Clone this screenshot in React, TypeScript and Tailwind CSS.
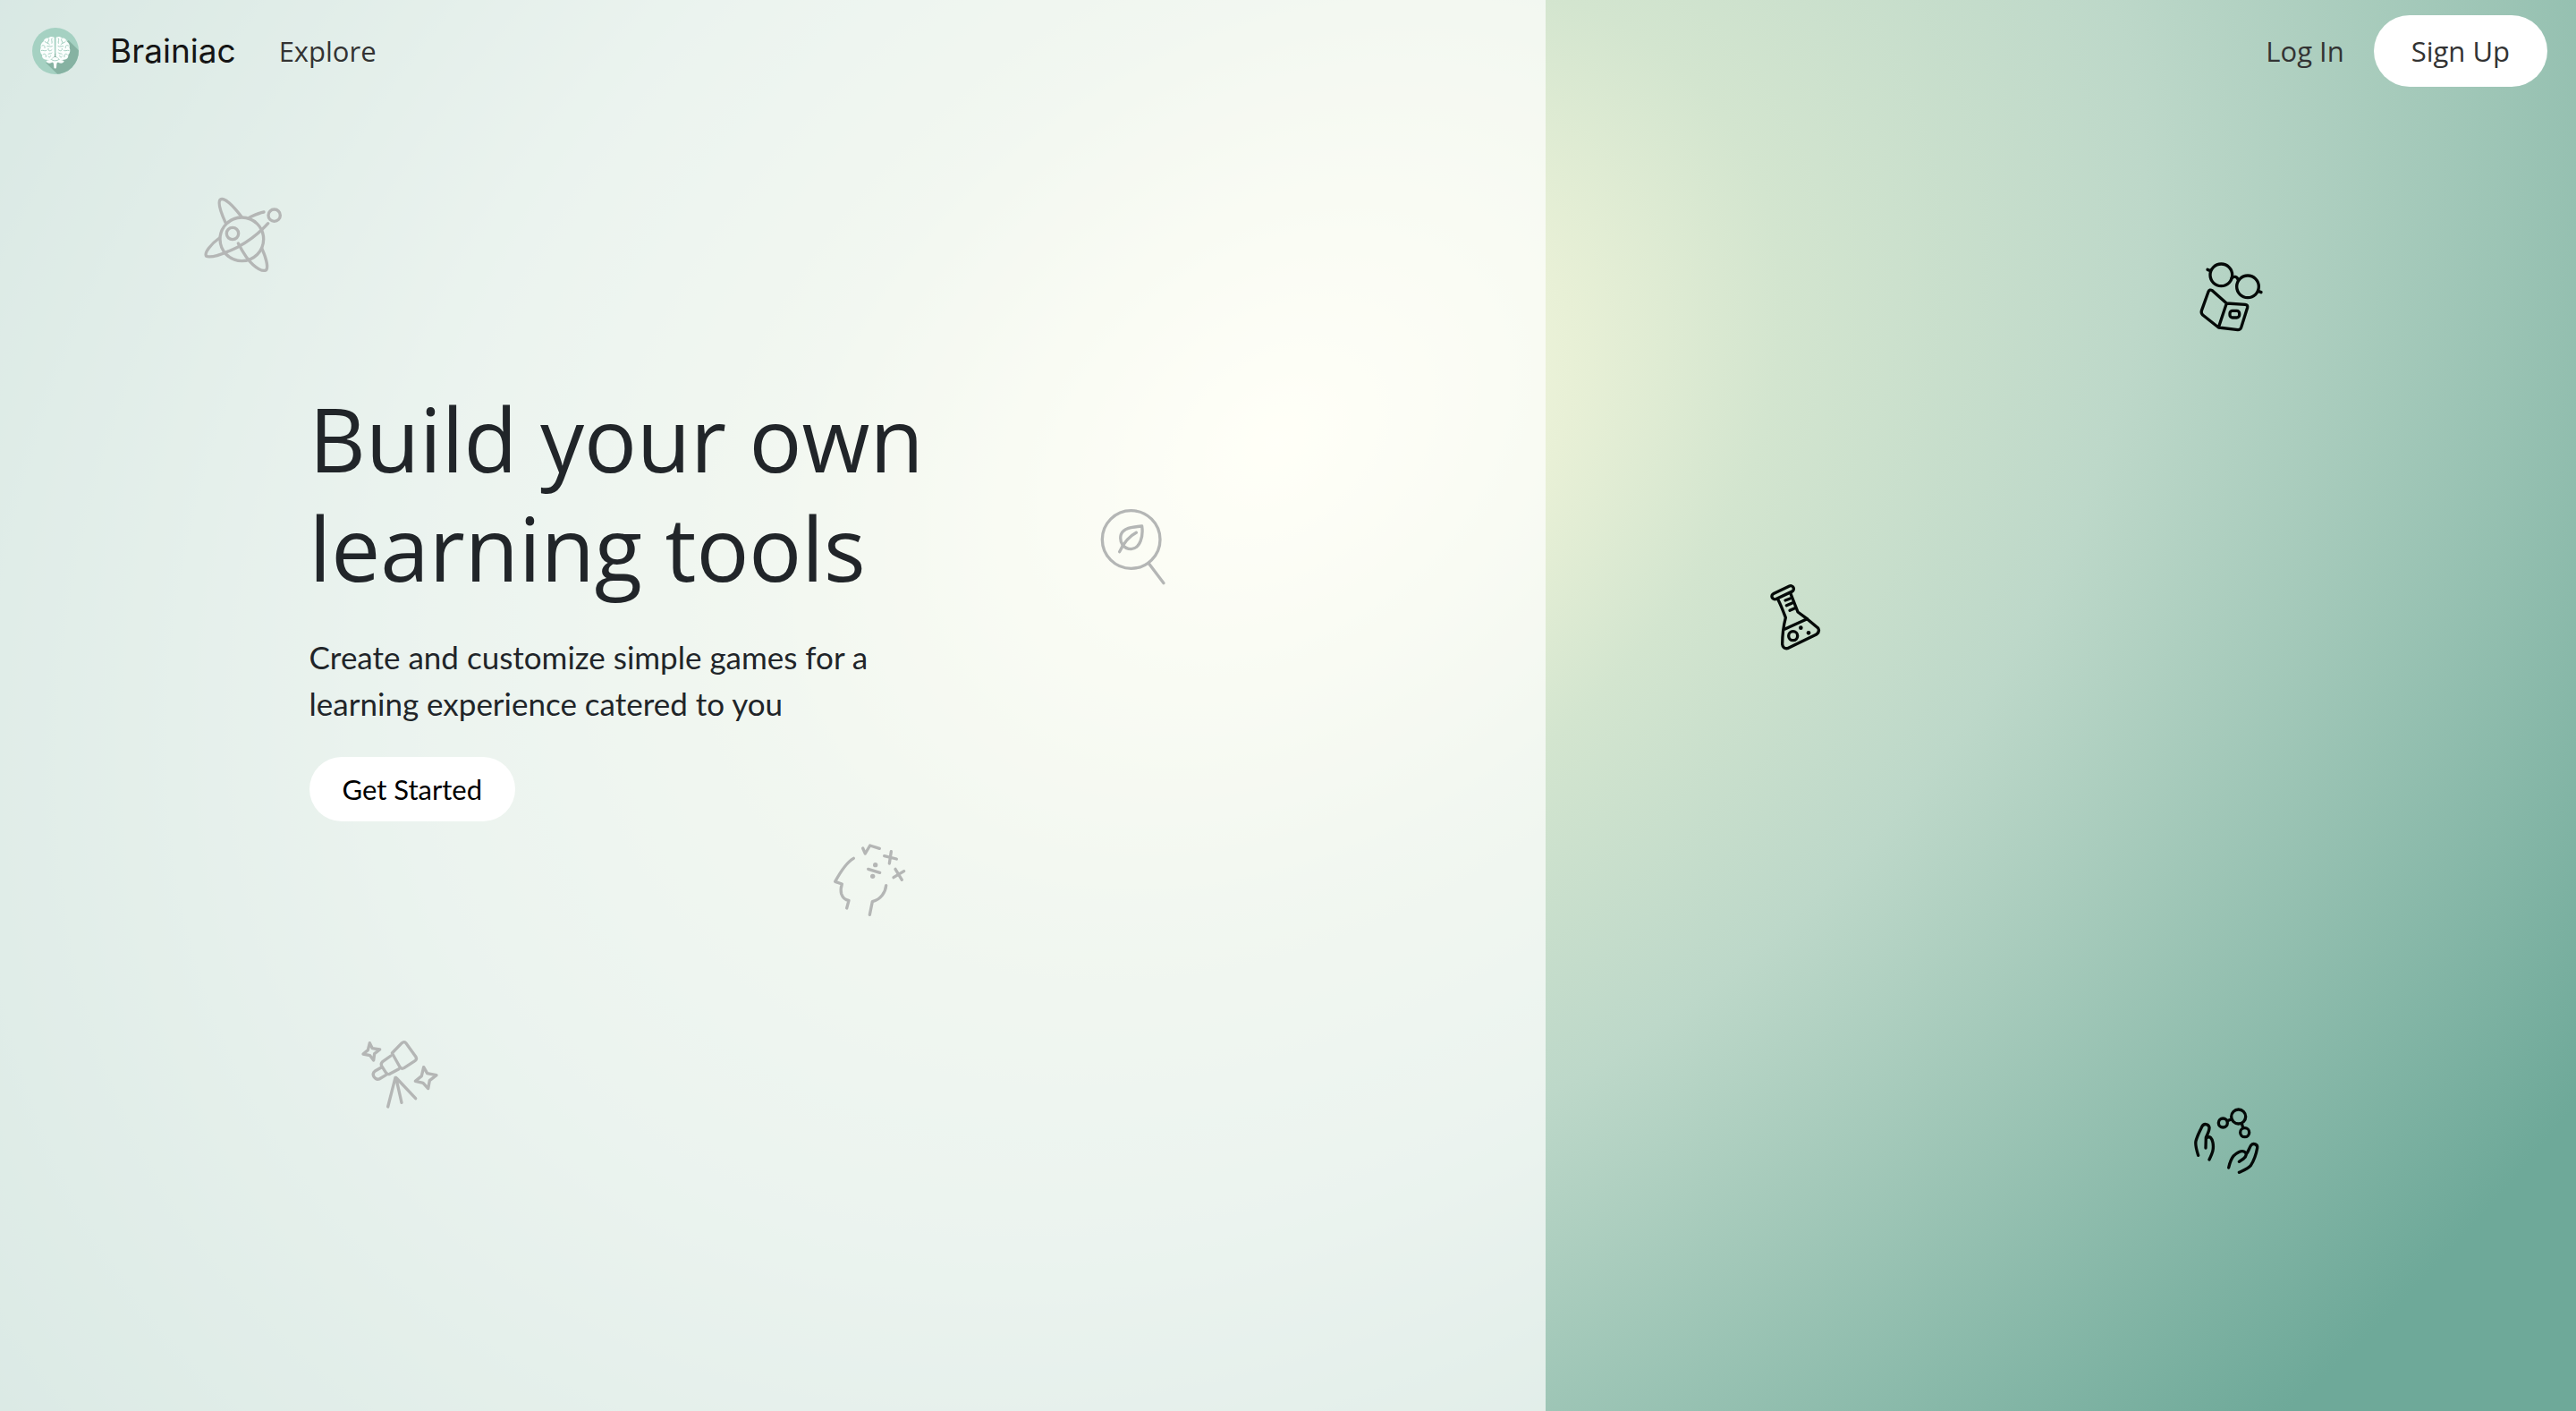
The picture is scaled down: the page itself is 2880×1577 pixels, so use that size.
import type { ReactNode } from "react";

type DoodleProps = {
  place: string;
  viewBox: string;
  children: ReactNode;
};

function Doodle({ place, viewBox, children }: DoodleProps) {
  return (
    <svg
      aria-hidden="true"
      viewBox={viewBox}
      className={`absolute ${place}`}
      fill="none"
      stroke="#050a08"
      strokeWidth="10"
      strokeLinecap="round"
      strokeLinejoin="round"
    >
      {children}
    </svg>
  );
}

function Planet() {
  return (
    <Doodle place="left-[7.3%] top-[13%] w-[120px]" viewBox="0 0 360 330">
      <circle cx="181" cy="187" r="73" />
      <circle cx="150" cy="168" r="20" />
      <circle cx="290" cy="107" r="20" />
      <path d="M126 131C112 100 100 66 108 55C122 43 152 76 179 110" />
      <path d="M106 183C78 203 54 232 62 244C84 254 145 224 168 213C200 196 240 166 269 134" />
      <path d="M204 116L213 111C228 104 243 98 255 96" />
      <path d="M169 201C185 232 202 258 219 273C238 290 252 295 262 291C272 281 260 244 248 217" />
    </Doodle>
  );
}

function Magnifier() {
  return (
    <Doodle place="left-[42.2%] top-[35.2%] w-[110px]" viewBox="0 0 330 330">
      <circle cx="149" cy="144" r="97" />
      <path d="M207 223L258 290" />
      <path d="M185 99C157 102 124 103 115 127C108 151 123 176 149 176C180 173 190 132 185 99Z" />
      <path d="M166 121C139 135 124 155 110 185" />
    </Doodle>
  );
}

function Head() {
  return (
    <Doodle place="left-[31.8%] top-[58.7%] w-[110px]" viewBox="0 0 330 330">
      <path d="M115 100C90 114 71 145 53 178L76 186C72 198 71 207 74 219C79 234 89 240 99 241L92 267" />
      <path d="M224 191C222 213 207 237 178 245L169 289" />
      <path d="M146 66L154 84L170 57L202 67" />
      <path d="M164 136L203 148M241 77L235 117M218 92L259 102M255 136L277 172M284 143L249 164" />
      <g fill="#050a08" stroke="none">
        <circle cx="188" cy="122" r="8" />
        <circle cx="179" cy="160" r="8" />
      </g>
    </Doodle>
  );
}

function Telescope() {
  return (
    <Doodle place="left-[13.5%] top-[72.6%] w-[120px]" viewBox="0 0 360 330">
      <path d="M148 96L181 62Q189 55 195 63L228 109Q232 116 226 121L188 146Q181 150 175 144Z" />
      <path d="M144 105L117 124Q109 131 113 139L127 161Q132 169 140 166L171 149" />
      <path d="M112 144L91 156Q81 164 87 175Q94 186 105 183L128 169" />
      <path d="M159 178L134 276M161 178L180 262M163 180L227 248" />
      <path d="M73 62L82 80L107 84L89 98L86 120L74 104L51 99L67 86Z" />
      <path d="M254 143L266 164L297 170L274 188L269 215L252 196L226 190L247 173Z" />
    </Doodle>
  );
}

function BookAndGlasses() {
  return (
    <Doodle place="left-[84.7%] top-[17.8%] w-[110px]" viewBox="0 0 330 300">
      <circle cx="133" cy="79" r="37" />
      <circle cx="222" cy="118" r="37" />
      <path d="M87 61L97 65M168 90C175 82 186 84 189 94M257 133L267 137" />
      <path d="M151 174L103 131Q94 126 90 135L67 199Q65 207 71 213L124 255L189 263Q197 263 200 255L221 188Q223 179 213 178L151 174L124 255" />
      <rect x="162" y="199" width="32" height="23" rx="9" />
    </Doodle>
  );
}

function Flask() {
  return (
    <Doodle place="left-[68.1%] top-[40.6%] w-[90px]" viewBox="0 0 270 300">
      <rect x="57" y="57" width="79" height="20" rx="10" transform="rotate(-25 96 67)" />
      <path d="M80 89C92 112 99 132 106 151C98 182 95 211 95 240Q97 256 112 254L208 208Q222 199 215 186L178 155L147 132L123 71" />
      <path d="M104 189L178 155M105 93L121 87M109 110L128 102M120 127L137 119" />
      <circle cx="131" cy="212" r="15" />
      <g fill="#050a08" stroke="none">
        <circle cx="157" cy="185" r="7" />
        <circle cx="183" cy="202" r="7" />
      </g>
    </Doodle>
  );
}

function Hands() {
  return (
    <Doodle place="left-[84.5%] top-[77.7%] w-[110px]" viewBox="0 0 330 300">
      <circle cx="206" cy="69" r="24" />
      <circle cx="154" cy="90" r="15" />
      <circle cx="227" cy="122" r="15" />
      <path d="M169 83L182 78M217 92L221 106" />
      <path d="M71 199C65 180 60 165 63 151C68 132 76 119 83 103C89 90 106 93 108 105C109 115 103 127 97 139L96 174" />
      <path d="M99 140C110 132 117 142 120 156C124 178 119 190 108 213" />
      <path d="M173 240C177 222 181 211 190 200C204 188 218 179 229 189C235 196 231 203 223 210L208 220" />
      <path d="M234 192C241 182 243 172 248 165C256 156 271 162 269 174C265 196 258 216 247 233C237 244 223 249 208 256" />
    </Doodle>
  );
}

function Logo() {
  return (
    <svg aria-hidden="true" viewBox="0 0 156 156" className="size-[52px] shrink-0">
      <defs>
        <clipPath id="logo-disc">
          <circle cx="78" cy="78" r="78" />
        </clipPath>
      </defs>
      <g clipPath="url(#logo-disc)">
        <rect width="156" height="156" fill="#a5d1c2" />
        <path d="M122 42L180 100V180H110L46 118Z" fill="#86b2a2" />
      </g>
      <g fill="#fbfefd">
        <path d="M74 32C66 28 58 30 54 35C46 33 39 39 38 46C30 51 27 60 29 67C25 76 27 86 33 91C32 102 40 109 50 107C55 112 63 109 66 103L75 96Z" />
        <path d="M80 32C88 28 96 30 100 35C108 33 115 39 116 46C124 51 127 60 125 67C129 76 127 86 121 91C122 102 114 109 104 107C99 112 91 109 88 103L79 96Z" />
        <path d="M47 111C56 109 62 108 66 105C70 97 84 97 88 105C92 108 98 109 107 111C106 118 98 121 90 118C86 115 83 117 82 122L81 134Q77 139 73 134L72 122C71 117 68 115 64 118C56 121 48 118 47 111Z" />
      </g>
      <g fill="none" stroke="#a5d1c2" strokeWidth="3" strokeLinecap="round">
        <path d="M66 36C62 42 69 46 66 52M56 38C58 44 51 46 52 52M42 46C46 52 54 50 58 56M33 60C40 56 44 62 42 68M50 62C56 60 60 66 67 62M31 76C38 74 42 80 48 76M54 70C52 78 60 80 66 74M36 90C42 84 48 90 46 98M54 88C58 84 64 90 66 84M54 96C56 102 62 98 62 94" />
        <path d="M88 36C92 42 85 46 88 52M98 38C96 44 103 46 102 52M112 46C108 52 100 50 96 56M121 60C114 56 110 62 112 68M104 62C98 60 94 66 87 62M123 76C116 74 112 80 106 76M100 70C102 78 94 80 88 74M118 90C112 84 106 90 108 98M100 88C96 84 90 90 88 84M100 96C98 102 92 98 92 94" />
        <path d="M64 106C68 112 86 112 90 106" />
      </g>
    </svg>
  );
}

export default function App() {
  return (
    <div className="relative isolate min-h-screen overflow-hidden font-['Open_Sans',sans-serif]">
      <div aria-hidden="true" className="absolute inset-0 -z-10 overflow-hidden bg-[#6ea999]">
        <div className="absolute left-[49.6%] top-[31.3%] size-[300vw] -translate-x-1/2 -translate-y-1/2 -rotate-37 bg-[radial-gradient(74vw_54vw_at_center,#ffffe6_0%,#e8f0d6_17%,#d3e5cf_29%,#bdd8c9_50%,#6ea999_100%)]" />
        <Planet />
        <Magnifier />
        <Head />
        <Telescope />
        <BookAndGlasses />
        <Flask />
        <Hands />
        <div className="absolute inset-y-0 left-0 w-3/5 bg-white/70" />
      </div>

      <header className="flex items-center justify-between py-[17px] pl-9 pr-8 text-[31px] leading-10 text-[#333333]">
        <nav aria-label="Main" className="flex items-center">
          <a href="#home" className="flex items-center gap-[35px] font-['Inter',sans-serif] text-[37px] text-[#151515]">
            <Logo />
            Brainiac
          </a>
          <a href="#explore" className="ml-[48px]">Explore</a>
        </nav>
        <div className="flex items-center gap-[33px]">
          <a href="#login">Log In</a>
          <a href="#signup" className="flex h-20 items-center rounded-full bg-white px-[42px]">Sign Up</a>
        </div>
      </header>

      <main className="w-3/5 pl-[12%] pt-[20vh] text-[#212529]">
        <h1 className="text-[98px] leading-[122px]">
          Build your own
          <br />
          learning tools
        </h1>
        <p className="mt-[35px] font-['Lato',sans-serif] text-[35px] leading-[52px]">
          Create and customize simple games for a
          <br />
          learning experience catered to you
        </p>
        <button
          type="button"
          className="mt-[34px] h-[72px] rounded-full bg-white px-[37px] font-['Lato',sans-serif] text-[31px] leading-10 text-black"
        >
          Get Started
        </button>
      </main>
    </div>
  );
}
